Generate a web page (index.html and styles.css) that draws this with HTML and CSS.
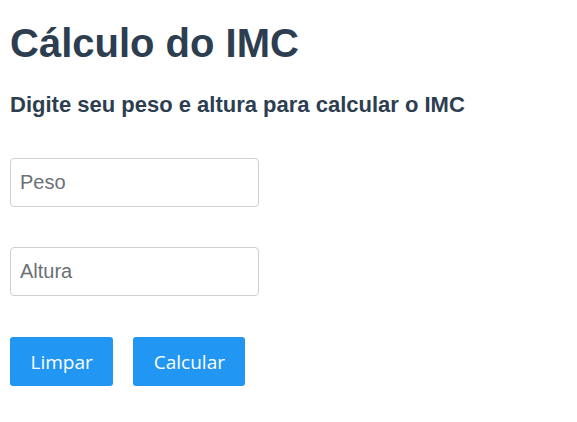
FILE: index.html
```html
<!DOCTYPE html>
<html lang="pt">
<head>
<meta charset="utf-8">
<title>Cálculo do IMC</title>
<link rel="stylesheet" href="styles.css">
</head>
<body>
<main class="app">
  <h1 class="title">Cálculo do IMC</h1>
  <h2 class="subtitle">Digite seu peso e altura para calcular o IMC</h2>
  <form class="form">
    <input class="field" type="text" placeholder="Peso">
    <input class="field" type="text" placeholder="Altura">
    <div class="actions">
      <button class="btn" type="button">Limpar</button>
      <button class="btn" type="button">Calcular</button>
    </div>
  </form>
</main>
</body>
</html>
```
FILE: styles.css
```css
html, body {
  margin: 0;
  padding: 0;
  background: #ffffff;
}
.app {
  padding: 20px 10px 10px;
  font-family: "Liberation Sans", Arial, sans-serif;
  color: #2c3e50;
}
.title {
  margin: 0;
  font-size: 40px;
  font-weight: bold;
  line-height: 46px;
}
.subtitle {
  margin: 26px 0 0;
  font-size: 22px;
  font-weight: bold;
  line-height: 26px;
}
.form {
  display: flex;
  flex-direction: column;
  align-items: flex-start;
  gap: 40px;
  margin-top: 40px;
}
.field {
  box-sizing: border-box;
  width: 249px;
  height: 49px;
  padding: 0 9px;
  border: 1px solid #cfcfcf;
  border-radius: 4px;
  font-family: "Liberation Sans", Arial, sans-serif;
  font-size: 20px;
  color: #333;
  outline: none;
}
.field::placeholder {
  color: #6b7075;
}
.actions {
  display: flex;
  gap: 20px;
  margin-top: 1px;
}
.btn {
  box-sizing: border-box;
  height: 49px;
  padding: 0 20.5px;
  border: none;
  border-radius: 3px;
  background: #2196f3;
  color: #ffffff;
  font-family: "Open Sans", "Noto Sans", sans-serif;
  font-size: 19px;
  cursor: pointer;
}
```
